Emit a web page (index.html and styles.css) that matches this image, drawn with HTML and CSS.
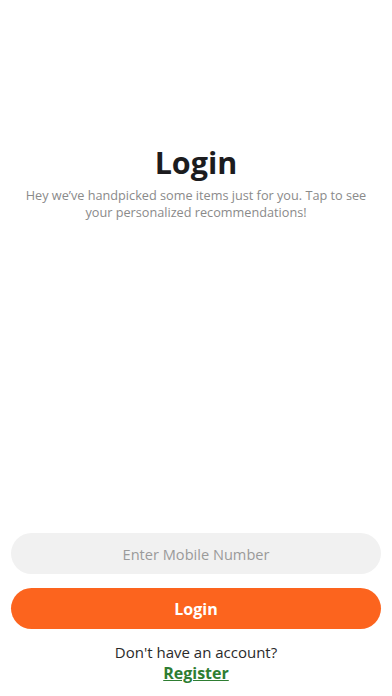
FILE: index.html
```
<!DOCTYPE html>
<html lang="en">
<head>
<meta charset="utf-8">
<meta name="viewport" content="width=device-width, initial-scale=1">
<title>Login</title>
<link rel="stylesheet" href="styles.css">
</head>
<body>
<main class="screen">
  <header class="intro">
    <h1 class="title">Login</h1>
    <p class="subtitle">Hey we’ve handpicked some items just for you. Tap to see your personalized recommendations!</p>
  </header>
  <form class="form">
    <input class="field" type="tel" placeholder="Enter Mobile Number">
    <button class="btn" type="button">Login</button>
    <p class="prompt">Don't have an account?</p>
    <a class="register" href="#">Register</a>
  </form>
</main>
</body>
</html>
```
FILE: styles.css
```
* { box-sizing: border-box; }
html, body { margin: 0; padding: 0; background: #fff; }
body {
  font-family: "Open Sans", "Noto Sans", "Liberation Sans", sans-serif;
  width: 392px;
  height: 696px;
  overflow: hidden;
}
.screen {
  display: flex;
  flex-direction: column;
  justify-content: space-between;
  height: 696px;
  padding: 0 11px;
}
.intro {
  padding-top: 142px;
  text-align: center;
}
.title {
  margin: 0;
  font-size: 30.5px;
  line-height: 40px;
  font-weight: 700;
  color: #1c1c1e;
}
.subtitle {
  margin: 5px 6px 0;
  font-size: 12.7px;
  line-height: 17px;
  color: #8a8a8a;
}
.form {
  display: flex;
  flex-direction: column;
  align-items: center;
  padding-bottom: 12px;
}
.field {
  width: 100%;
  height: 41px;
  border: none;
  border-radius: 21px;
  background: #f1f1f1;
  text-align: center;
  font-family: inherit;
  font-size: 14.6px;
  color: #333;
  outline: none;
}
.field::placeholder { color: #9a9a9a; }
.btn {
  width: 100%;
  height: 41px;
  margin-top: 14px;
  border: none;
  border-radius: 21px;
  background: #fc641e;
  color: #fff;
  font-family: inherit;
  font-size: 16px;
  font-weight: 700;
}
.prompt {
  margin: 13px 0 0;
  font-size: 15px;
  line-height: 20px;
  color: #2a2a2a;
}
.register {
  margin-top: 0;
  font-size: 16px;
  line-height: 22px;
  font-weight: 700;
  color: #2e7d32;
  text-decoration: underline;
}
```
